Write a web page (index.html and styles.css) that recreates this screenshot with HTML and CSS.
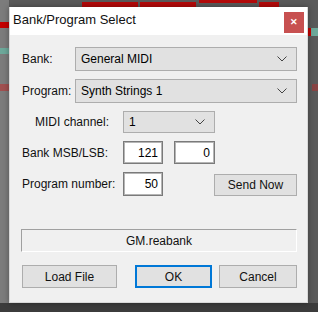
FILE: index.html
```html
<!DOCTYPE html>
<html lang="en">
<head>
    <meta charset="UTF-8">
    <title>Bank/Program Select</title>
    <link rel="stylesheet" href="styles.css">
</head>
<body>
    <div class="dialog">
        <!-- Title bar -->
        <div class="titlebar">
            <span class="title">Bank/Program Select</span>
            <div class="close-btn">&#x2715;</div>
        </div>

        <div class="content">
            <div class="row">
                <span class="lbl lbl-short">Bank:</span>
                <div class="combo combo-wide">
                    <span>General MIDI</span>
                    <svg class="chev" width="10" height="6" viewBox="0 0 10 6"><polyline points="0.5,0.5 5,5 9.5,0.5" fill="none" stroke="#444" stroke-width="1"/></svg>
                </div>
            </div>

            <div class="row">
                <span class="lbl lbl-short">Program:</span>
                <div class="combo combo-wide">
                    <span>Synth Strings 1</span>
                    <svg class="chev" width="10" height="6" viewBox="0 0 10 6"><polyline points="0.5,0.5 5,5 9.5,0.5" fill="none" stroke="#444" stroke-width="1"/></svg>
                </div>
            </div>

            <div class="row row-midi">
                <span class="lbl lbl-long lbl-indent">MIDI channel:</span>
                <div class="combo combo-small">
                    <span>1</span>
                    <svg class="chev" width="10" height="6" viewBox="0 0 10 6"><polyline points="0.5,0.5 5,5 9.5,0.5" fill="none" stroke="#444" stroke-width="1"/></svg>
                </div>
            </div>

            <div class="row row-msb">
                <span class="lbl lbl-long">Bank MSB/LSB:</span>
                <div class="num">121</div>
                <div class="num num-2">0</div>
            </div>

            <div class="row row-prog">
                <span class="lbl lbl-long">Program number:</span>
                <div class="num">50</div>
                <button class="btn send-btn">Send Now</button>
            </div>

            <div class="file-field">GM.reabank</div>

            <div class="buttons">
                <button class="btn load-btn">Load File</button>
                <button class="btn ok-btn">OK</button>
                <button class="btn cancel-btn">Cancel</button>
            </div>
        </div>
    </div>
</body>
</html>
```

FILE: styles.css
```css
/* Basic Reset */
* { box-sizing: border-box; margin: 0; padding: 0; }

body {
    width: 318px;
    height: 312px;
    overflow: hidden;
    padding: 7px 10px 0 9px;
    font-family: "Liberation Sans", Arial, sans-serif;
    font-size: 12px;
    color: #000;
    background:
        linear-gradient(#b40a0a, #b40a0a) 82px 2px / 56px 5px no-repeat,
        linear-gradient(#b40a0a, #b40a0a) 140px 2px / 56px 5px no-repeat,
        linear-gradient(#b40a0a, #b40a0a) 199px 0 / 58px 3px no-repeat,
        linear-gradient(#b40a0a, #b40a0a) 259px 2px / 20px 5px no-repeat,
        linear-gradient(#c40000, #c40000) 0 22px / 9px 6px no-repeat,
        linear-gradient(#6da89a, #6da89a) 0 48px / 9px 6px no-repeat,
        linear-gradient(#a05050, #a05050) 0 84px / 9px 7px no-repeat,
        linear-gradient(#c40000, #c40000) 308px 28px / 3px 8px no-repeat,
        linear-gradient(#6da89a, #6da89a) 311px 28px / 7px 8px no-repeat,
        linear-gradient(#884444, #884444) 312px 84px / 6px 7px no-repeat,
        linear-gradient(#3c3c3c, #3c3c3c) 0 303px / 100% 9px no-repeat,
        linear-gradient(90deg, #7c7c7c 0, #7c7c7c 9px, #5a5a5a 9px);
}

/* Dialog window */
.dialog {
    width: 299px;
    height: 296px;
    background-color: #f0f0f0;
    border: 1px solid #d8d8d8;
    border-top: none;
    box-shadow: 0 0 6px rgba(0, 0, 0, 0.35);
}

.titlebar {
    height: 28px;
    background-color: #fff;
    display: flex;
    align-items: center;
    justify-content: space-between;
    padding: 0 2px 0 3px;
}

.title {
    font-size: 13px;
    color: #111;
    padding-bottom: 3px;
}

.close-btn {
    width: 20px;
    height: 21px;
    background-color: #c75050;
    color: #fff;
    font-size: 9px;
    font-weight: bold;
    display: flex;
    align-items: center;
    justify-content: center;
    margin-top: 2px;
    margin-right: 1px;
}

/* Form */
.content {
    padding: 12px 10px 0 12px;
}

.row {
    display: flex;
    align-items: center;
    margin-bottom: 8px;
}

.row-midi { margin-top: 1px; }

.lbl {
    color: #111;
}

.lbl-short { width: 53px; }
.lbl-long { width: 101px; }
.lbl-indent { padding-left: 13px; }

.combo {
    height: 24px;
    background-color: #e1e1e1;
    border: 1px solid #adadad;
    display: flex;
    align-items: center;
    justify-content: space-between;
    padding: 0 9px 0 5px;
}

.combo-wide { width: 222px; }

.combo-small {
    width: 92px;
    height: 22px;
}

.num {
    width: 40px;
    height: 23px;
    background-color: #fff;
    border: 1px solid #7a7a7a;
    box-shadow: inset 0 0 0 1px #b5b5b5;
    text-align: right;
    padding: 4px 4px 0 0;
}

.row-prog .num { height: 24px; }

.num-2 {
    width: 41px;
    margin-left: 11px;
}

.btn {
    height: 23px;
    background-color: #e1e1e1;
    border: 1px solid #adadad;
    font-family: inherit;
    font-size: 12px;
    color: #111;
}

.send-btn {
    width: 83px;
    height: 22px;
    margin-left: 51px;
    margin-top: 2px;
}

.file-field {
    margin-top: 33px;
    height: 23px;
    width: 276px;
    margin-left: -1px;
    border: 1px solid #fff;
    border-top-color: #a0a0a0;
    border-left-color: #a0a0a0;
    text-align: center;
    padding-top: 4px;
    color: #111;
}

.buttons {
    display: flex;
    margin-top: 13px;
}

.load-btn { width: 95px; }

.ok-btn {
    width: 77px;
    margin-left: 18px;
    border: 2px solid #0078d7;
}

.cancel-btn {
    width: 78px;
    margin-left: 7px;
}
```
